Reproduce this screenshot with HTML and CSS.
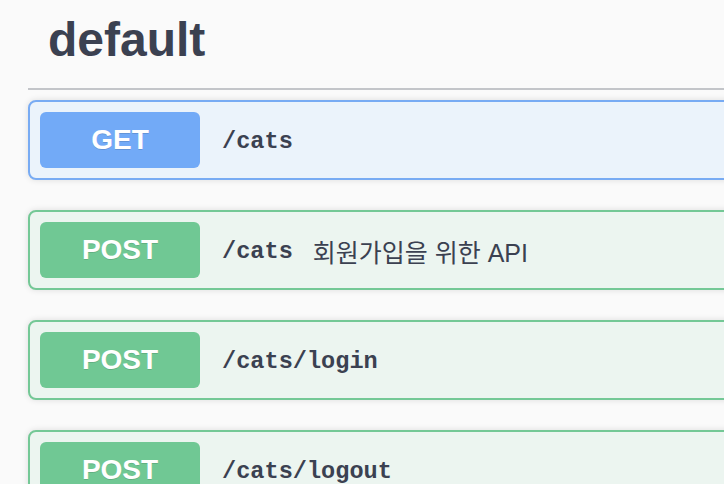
FILE: index.html
```html
<!DOCTYPE html>
<html lang="ko">
<head>
<meta charset="utf-8">
<title>default</title>
<link rel="stylesheet" href="styles.css">
</head>
<body>
<div class="page">
  <section class="tag-section">
    <h3 class="tag-title"><span>default</span></h3>
    <div class="ops">
      <div class="op op-get">
        <span class="method">GET</span>
        <span class="path">/cats</span>
      </div>
      <div class="op op-post">
        <span class="method">POST</span>
        <span class="path">/cats</span>
        <span class="desc">회원가입을 위한 API</span>
      </div>
      <div class="op op-post">
        <span class="method">POST</span>
        <span class="path">/cats/login</span>
      </div>
      <div class="op op-post">
        <span class="method">POST</span>
        <span class="path">/cats/logout</span>
      </div>
    </div>
  </section>
</div>
</body>
</html>
```

FILE: styles.css
```css
html, body {
  margin: 0;
  padding: 0;
  background: #fafafa;
  overflow: hidden;
}

.page {
  width: 1100px;
  padding: 12px 0 0 28px;
  font-family: "Liberation Sans", Arial, "Noto Sans CJK KR", sans-serif;
  color: #3b4151;
}

.tag-title {
  margin: 0 0 10px;
  padding: 0 0 21px 20px;
  font-size: 48px;
  font-weight: 700;
  line-height: normal;
  color: #3b4151;
  border-bottom: 2px solid #c3c5c9;
}

.ops {
  display: flex;
  flex-direction: column;
  gap: 30px;
}

.op {
  display: flex;
  align-items: center;
  padding: 10px;
  border: 2px solid;
  border-radius: 8px;
  box-shadow: 0 0 6px rgba(0, 0, 0, 0.12);
}

.op-get {
  background: #ebf3fb;
  border-color: #78abf3;
}

.op-post {
  background: #ecf5f0;
  border-color: #74c896;
}

.method {
  flex: none;
  width: 160px;
  padding: 12px 0;
  line-height: 32px;
  text-align: center;
  border-radius: 6px;
  color: #fff;
  font-size: 28px;
  font-weight: 700;
  text-shadow: 0 1px 0 rgba(0, 0, 0, 0.12);
}

.op-get .method {
  background: #72aaf7;
}

.op-post .method {
  background: #70c894;
}

.path {
  margin-left: 22px;
  padding-top: 3px;
  font-family: "Liberation Mono", "Courier New", monospace;
  font-size: 23.6px;
  font-weight: 700;
  color: #3b4151;
}

.desc {
  margin-left: 20px;
  padding-top: 1px;
  font-family: "Liberation Sans", Arial, "Noto Sans CJK KR", sans-serif;
  font-size: 25px;
  color: #3b4151;
}
```
